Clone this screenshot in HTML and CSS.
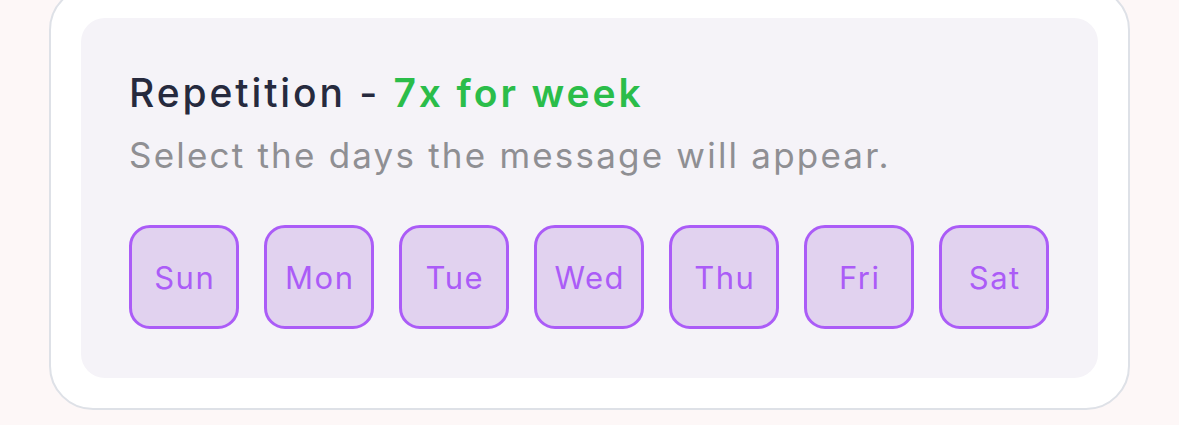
FILE: index.html
```html
<!DOCTYPE html>
<html lang="en">
<head>
<meta charset="utf-8">
<title>Repetition</title>
<link rel="stylesheet" href="styles.css">
</head>
<body>
<div class="card">
  <section class="panel">
    <h2 class="title">Repetition - <span class="count">7x for week</span></h2>
    <p class="subtitle">Select the days the message will appear.</p>
    <div class="days">
      <button class="day">Sun</button>
      <button class="day">Mon</button>
      <button class="day">Tue</button>
      <button class="day">Wed</button>
      <button class="day">Thu</button>
      <button class="day">Fri</button>
      <button class="day">Sat</button>
    </div>
  </section>
</div>
</body>
</html>
```
FILE: styles.css
```css
html, body {
  margin: 0;
  padding: 0;
  background: #fdf7f7;
  font-family: Inter, "Noto Sans", sans-serif;
}
body {
  padding: 0 49px;
  height: 425px;
  overflow: hidden;
}
.card {
  margin-top: -14px;
  width: 1081px;
  box-sizing: border-box;
  background: #ffffff;
  border: 2px solid #dee1e7;
  border-radius: 44px;
  padding: 30px;
}
.panel {
  background: #f5f3f8;
  border-radius: 24px;
  padding: 52px 48px 49px 48px;
}
.title {
  margin: 0;
  font-size: 39px;
  line-height: 46px;
  font-weight: 500;
  letter-spacing: 2.9px;
  color: #262a3e;
}
.count {
  color: #2bbd4a;
  font-weight: 600;
}
.subtitle {
  margin: 18px 0 0;
  font-size: 35px;
  line-height: 42px;
  font-weight: 400;
  letter-spacing: 2.2px;
  color: #8f8f93;
}
.days {
  display: flex;
  gap: 25px;
  margin-top: 49px;
}
.day {
  width: 110px;
  height: 104px;
  box-sizing: border-box;
  border: 3px solid #ab5cf7;
  border-radius: 21px;
  background: #e1d2ef;
  color: #ab5cf7;
  font-family: Inter, "Noto Sans", sans-serif;
  font-size: 31px;
  font-weight: 400;
  letter-spacing: 1.5px;
  padding: 0 0 0 1.5px;
  display: flex;
  align-items: center;
  justify-content: center;
}
```
